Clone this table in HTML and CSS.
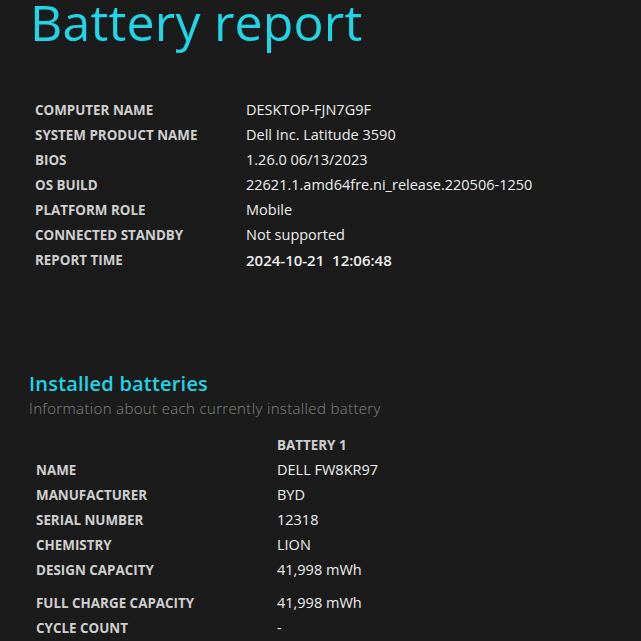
FILE: index.html
```html
<!DOCTYPE html>
<html>
<head>
<meta charset="utf-8">
<link rel="stylesheet" href="styles.css">
</head>
<body>
<main class="page">
  <h1 class="title">Battery report</h1>
  <section class="info">
    <div class="row"><span class="label">COMPUTER NAME</span><span class="value">DESKTOP-FJN7G9F</span></div>
    <div class="row"><span class="label">SYSTEM PRODUCT NAME</span><span class="value">Dell Inc. Latitude 3590</span></div>
    <div class="row"><span class="label">BIOS</span><span class="value">1.26.0 06/13/2023</span></div>
    <div class="row"><span class="label">OS BUILD</span><span class="value">22621.1.amd64fre.ni_release.220506-1250</span></div>
    <div class="row"><span class="label">PLATFORM ROLE</span><span class="value">Mobile</span></div>
    <div class="row"><span class="label">CONNECTED STANDBY</span><span class="value">Not supported</span></div>
    <div class="row"><span class="label">REPORT TIME</span><span class="value strong">2024-10-21&nbsp; 12:06:48</span></div>
  </section>
  <section class="batteries">
    <h2 class="section-title">Installed batteries</h2>
    <p class="section-sub">Information about each currently installed battery</p>
    <div class="btable">
      <div class="brow head"><span class="blabel"></span><span class="bhead">BATTERY 1</span></div>
      <div class="brow"><span class="blabel">NAME</span><span class="bvalue">DELL FW8KR97</span></div>
      <div class="brow"><span class="blabel">MANUFACTURER</span><span class="bvalue">BYD</span></div>
      <div class="brow"><span class="blabel">SERIAL NUMBER</span><span class="bvalue">12318</span></div>
      <div class="brow"><span class="blabel">CHEMISTRY</span><span class="bvalue">LION</span></div>
      <div class="brow"><span class="blabel">DESIGN CAPACITY</span><span class="bvalue">41,998 mWh</span></div>
      <div class="brow gap"><span class="blabel">FULL CHARGE CAPACITY</span><span class="bvalue">41,998 mWh</span></div>
      <div class="brow"><span class="blabel">CYCLE COUNT</span><span class="bvalue">-</span></div>
    </div>
  </section>
</main>
</body>
</html>
```
FILE: styles.css
```css
html, body {
  margin: 0;
  padding: 0;
  background: #1b1b1b;
}
body {
  font-family: "Open Sans", "Noto Sans", sans-serif;
  color: #ececec;
  overflow: hidden;
  height: 641px;
}
.page {
  padding-left: 29px;
}
.title {
  margin: 0;
  padding-left: 1px;
  font-weight: 400;
  font-size: 50px;
  line-height: 50px;
  height: 52px;
  color: #1fd5e6;
  letter-spacing: 0.2px;
  margin-top: -3px;
}
.info {
  margin-top: 48px;
  padding-left: 6px;
}
.row {
  display: grid;
  grid-template-columns: 211px auto;
  height: 25px;
  align-items: center;
}
.label, .blabel, .bhead {
  font-weight: 700;
  font-size: 13.4px;
  color: #cfcfcf;
  white-space: nowrap;
}
.value, .bvalue {
  font-size: 14.5px;
  color: #eeeeee;
  white-space: nowrap;
}
.strong {
  font-weight: 600;
  font-size: 15px;
}
.batteries {
  margin-top: 100px;
}
.section-title {
  margin: 0;
  font-size: 20px;
  font-weight: 600;
  color: #1fd5e6;
  line-height: 24px;
  letter-spacing: 0.2px;
}
.section-sub {
  margin: 0;
  font-size: 15px;
  font-weight: 300;
  color: #858585;
  line-height: 24px;
  letter-spacing: 0.35px;
}
.btable {
  margin-top: 13px;
  padding-left: 7px;
}
.brow {
  display: grid;
  grid-template-columns: 241px auto;
  height: 25px;
  align-items: center;
}
.brow.head {
  height: 24px;
}
.brow.gap {
  margin-top: 8px;
}
```
